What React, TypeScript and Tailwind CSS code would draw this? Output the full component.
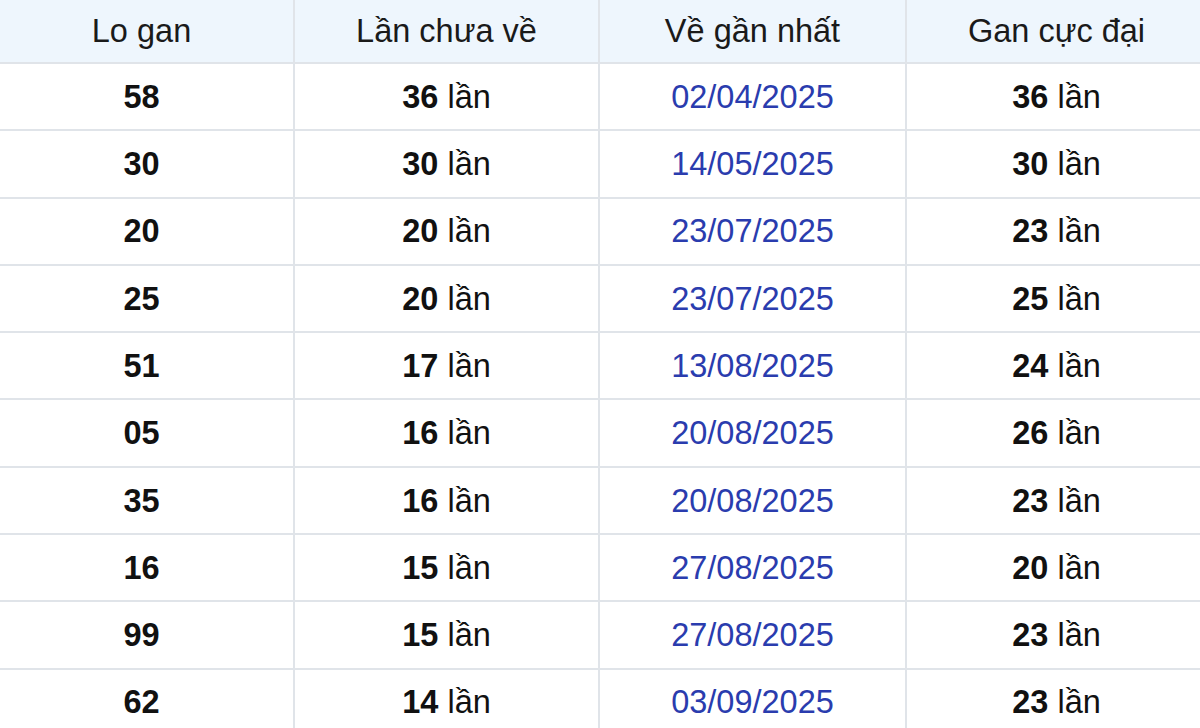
const rows = [
  { lo: '58', chua: '36', date: '02/04/2025', max: '36' },
  { lo: '30', chua: '30', date: '14/05/2025', max: '30' },
  { lo: '20', chua: '20', date: '23/07/2025', max: '23' },
  { lo: '25', chua: '20', date: '23/07/2025', max: '25' },
  { lo: '51', chua: '17', date: '13/08/2025', max: '24' },
  { lo: '05', chua: '16', date: '20/08/2025', max: '26' },
  { lo: '35', chua: '16', date: '20/08/2025', max: '23' },
  { lo: '16', chua: '15', date: '27/08/2025', max: '20' },
  { lo: '99', chua: '15', date: '27/08/2025', max: '23' },
  { lo: '62', chua: '14', date: '03/09/2025', max: '23' },
];

const headers = ['Lo gan', 'Lần chưa về', 'Về gần nhất', 'Gan cực đại'];

export default function App() {
  return (
    <div className="h-[728px] w-[1200px] overflow-hidden bg-white font-['Liberation_Sans',Arial,sans-serif] text-[32.5px] text-[#111]">
      <table className="-ml-[12px] -mt-[2px] w-[1220px] table-fixed border-collapse">
        <colgroup>
          <col className="w-[305px]" />
          <col className="w-[305px]" />
          <col className="w-[307px]" />
          <col />
        </colgroup>
        <thead>
          <tr className="h-[64px] bg-[#eef6fd]">
            {headers.map((h) => (
              <th key={h} className="border-2 border-[#e0e4e9] text-center font-normal text-[#1a1a1a]">
                {h}
              </th>
            ))}
          </tr>
        </thead>
        <tbody>
          {rows.map((r, i) => (
            <tr key={i} className="h-[67.3px]">
              <td className="border-2 border-[#e0e4e9] pt-[1px] text-center font-bold">{r.lo}</td>
              <td className="border-2 border-[#e0e4e9] pt-[1px] text-center">
                <b>{r.chua}</b> lần
              </td>
              <td className="border-2 border-[#e0e4e9] pt-[1px] text-center text-[#2a3cae]">{r.date}</td>
              <td className="border-2 border-[#e0e4e9] pt-[1px] text-center">
                <b>{r.max}</b> lần
              </td>
            </tr>
          ))}
        </tbody>
      </table>
    </div>
  );
}
